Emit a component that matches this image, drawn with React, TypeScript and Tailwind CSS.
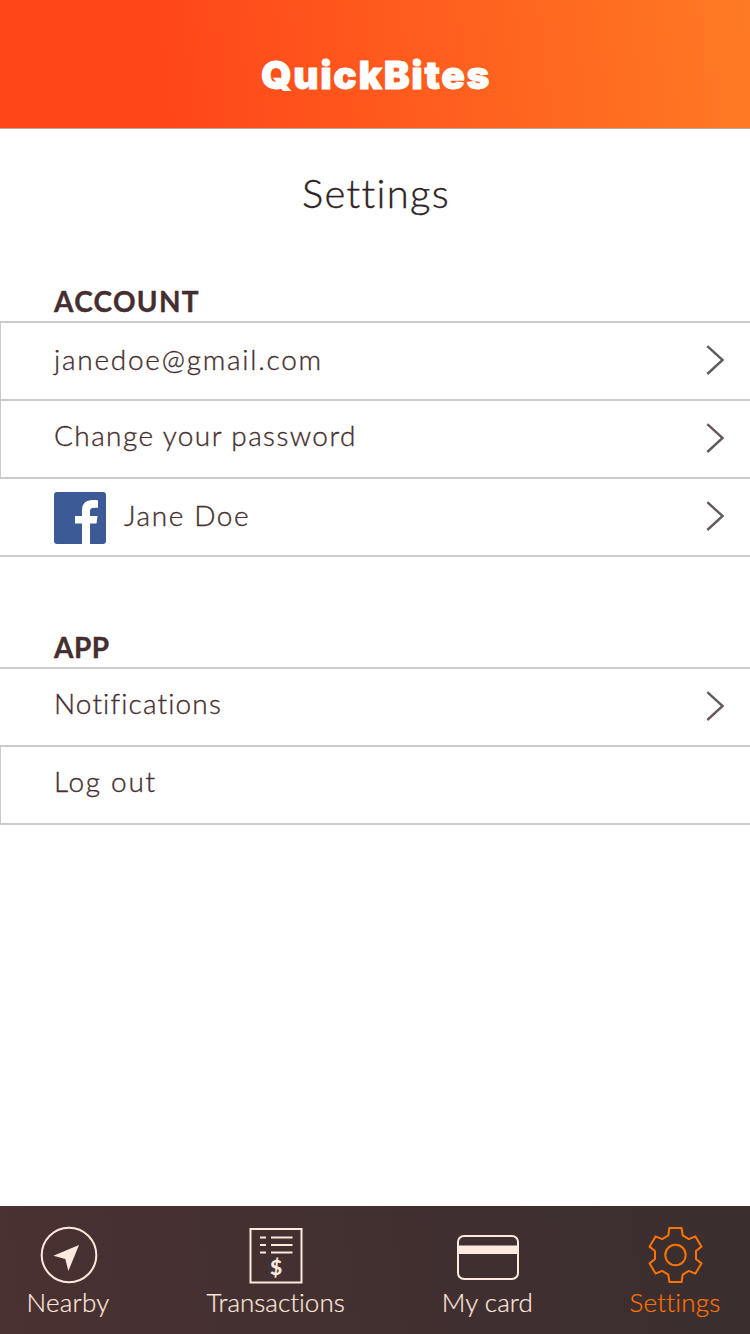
import type { ReactNode } from "react";

function Chevron() {
  return (
    <svg className="mt-[21px] h-8 w-5 shrink-0" viewBox="0 0 20 32" fill="none" stroke="#635b5b" strokeWidth="2.4">
      <path d="M2.3 2.2 17.6 16 2.3 30" />
    </svg>
  );
}

function FacebookIcon() {
  return (
    <svg className="mr-[18px] mt-[13px] h-[52px] w-[52px]" viewBox="0 0 52 52">
      <rect width="52" height="52" rx="3" fill="#3c5a96" />
      <path
        d="M28 52V31.500h-7V24h7v-5.500C28 11.600 32 8 38.300 8c2.500 0 4.700.2 5.700.3v7.400h-3.600c-3.600 0-4.400 1.500-4.400 4V24h7.500l-1 7.500H36V52z"
        fill="#fff"
      />
    </svg>
  );
}

function NearbyIcon() {
  return (
    <svg className="ml-0.5 h-[58px] w-[58px]" viewBox="0 0 58 58">
      <circle cx="29" cy="29" r="27.300" fill="none" stroke="#fde9de" strokeWidth="2" />
      <path d="M39 19 28.400 45 25.300 33 13.400 29.800z" fill="#fde9de" />
    </svg>
  );
}

function TransactionsIcon() {
  return (
    <svg className="h-[58px] w-[54px]" viewBox="0 0 54 58" fill="none" stroke="#fde9de" strokeWidth="2">
      <rect x="1.500" y="3" width="51" height="53.500" />
      <path d="M11 11.500h6M22 11.500h21.500M11 19h6M22 19h21.500M11 26.500h6M22 26.500h21.500" />
      <text x="27" y="49" textAnchor="middle" fill="#fde9de" stroke="none" className="font-['Lato'] text-[21px] font-black">
        $
      </text>
    </svg>
  );
}

function CardIcon() {
  return (
    <svg className="ml-0.5 h-[58px] w-16" viewBox="0 0 64 58">
      <rect x="2" y="10" width="60" height="43" rx="6" fill="none" stroke="#fde9de" strokeWidth="2" />
      <rect x="2" y="19.500" width="60" height="8.500" fill="#fde9de" />
    </svg>
  );
}

function GearIcon() {
  return (
    <svg className="ml-0.5 h-[58px] w-[58px]" viewBox="0 0 58 58" fill="none" stroke="#ff7300" strokeWidth="2" strokeLinejoin="round">
      <circle cx="28.500" cy="29" r="10.200" />
      <path
        transform="translate(-.5 0)"
        d="M22.900 2H35.100L36.200 9.400 42.300 13.100 48.900 10.400 54.900 20.600 49.500 25V33L54.900 37.400 48.900 47.600 42.300 44.900 36.200 48.600 35.100 56H22.900L21.800 48.600 15.700 44.900 9.100 47.600 3.100 37.400 8.500 33V25L3.100 20.600 9.100 10.400 15.700 13.100 21.800 9.400z"
      />
    </svg>
  );
}

interface RowProps {
  edge?: boolean;
  arrow?: boolean;
  icon?: ReactNode;
  children: ReactNode;
}

function Row({ edge, arrow = true, icon, children }: RowProps) {
  return (
    <li
      className={`flex h-[78px] items-start border-t-2 border-[#cbcbcb] pr-[25px] text-[28px] leading-10 ${edge ? "border-l pl-[53px]" : "pl-[54px]"}`}
    >
      {icon}
      <div className="flex-1">{children}</div>
      {arrow && <Chevron />}
    </li>
  );
}

function SectionTitle({ children }: { children: ReactNode }) {
  return <h2 className="pl-[54px] text-[28px] leading-10 font-bold text-[#452e2f]">{children}</h2>;
}

export default function App() {
  return (
    <div className="flex h-[1334px] w-[750px] flex-col bg-white font-['Lato',sans-serif] font-light text-[#452e2f] [font-variant-ligatures:none] [-webkit-text-stroke:0.35px_currentColor]">
      <header className="h-[129px] border-b border-[#b3aaa6] bg-[linear-gradient(83deg,#ff4619_22%,#ff7a24_100%)] pt-[51px] text-center">
        <span className="pl-0.5 font-['Inter',sans-serif] text-[39px] leading-[48px] font-black tracking-[1.6px] text-white [-webkit-text-stroke:0.8px_white]">
          QuickBites
        </span>
      </header>

      <main className="flex-1">
        <h1 className="mt-10 mb-16 pl-0.5 text-center text-[40px] leading-[48px] tracking-[1.3px] text-[#2c2223]">
          Settings
        </h1>

        <SectionTitle>
          <span className="tracking-[1.3px]">ACCOUNT</span>
        </SectionTitle>
        <ul className="border-b-2 border-[#cbcbcb]">
          <Row edge>
            <p className="pt-4 tracking-[1.75px]">janedoe@gmail.com</p>
          </Row>
          <Row edge>
            <p className="pt-[14px] tracking-[1.4px]">Change your password</p>
          </Row>
          <Row icon={<FacebookIcon />}>
            <p className="pt-4 tracking-[1.6px]">Jane Doe</p>
          </Row>
        </ul>

        <div className="mt-[70px]">
          <SectionTitle>
            <span className="tracking-[0.5px]">APP</span>
          </SectionTitle>
        </div>
        <ul className="border-b-2 border-[#cbcbcb]">
          <Row>
            <p className="pt-[14px] tracking-[1.15px]">Notifications</p>
          </Row>
          <Row edge arrow={false}>
            <p className="pt-[14px] tracking-[1.7px]">Log out</p>
          </Row>
        </ul>
      </main>

      <nav className="flex h-32 items-start justify-between bg-[linear-gradient(83deg,#4a3132_0%,#3a2e2f_100%)] pt-5 pr-[29px] pl-[26px] text-[26px] leading-8 text-[#fde9de] [-webkit-text-stroke:0.2px_currentColor]">
        <a className="flex w-[84px] flex-col items-center gap-0.5">
          <NearbyIcon />
          <span className="tracking-[0.2px]">Nearby</span>
        </a>
        <a className="flex w-[140px] flex-col items-center gap-0.5">
          <TransactionsIcon />
          <span className="whitespace-nowrap">Transactions</span>
        </a>
        <a className="flex w-[92px] flex-col items-center gap-0.5">
          <CardIcon />
          <span className="tracking-[0.1px]">My card</span>
        </a>
        <a className="flex w-[92px] flex-col items-center gap-0.5 text-[#ff7300]">
          <GearIcon />
          <span className="tracking-[0.15px]">Settings</span>
        </a>
      </nav>
    </div>
  );
}
